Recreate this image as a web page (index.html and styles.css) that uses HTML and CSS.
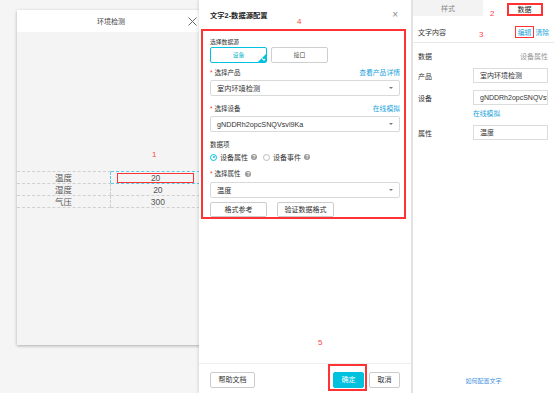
FILE: index.html
```html
<!DOCTYPE html>
<html lang="zh-CN">
<head>
    <meta charset="UTF-8">
    <title>文字2-数据源配置</title>
    <link rel="stylesheet" href="styles.css">
</head>
<body>
<div class="app">
    <div class="stage">
        <div class="preview">
            <div class="preview-head">
                <span class="preview-title">环境检测</span>
                <svg class="preview-close" width="9" height="9" viewBox="0 0 9 9">
                    <path d="M0.5 0.5L8.5 8.5M8.5 0.5L0.5 8.5" stroke="#666" stroke-width="1" fill="none"/>
                </svg>
            </div>
            <div class="preview-body">
                <span class="note note-1">1</span>
                <table class="grid">
                    <tr><td>温度</td><td class="picked"><span class="cell-mark">20</span></td></tr>
                    <tr><td>湿度</td><td>20</td></tr>
                    <tr><td>气压</td><td>300</td></tr>
                </table>
            </div>
        </div>
    </div>

    <div class="dialog">
        <div class="dialog-head">
            <span class="dialog-title">文字2-数据源配置</span>
            <span class="dialog-close">×</span>
        </div>
        <span class="note note-4">4</span>
        <div class="form mark">
            <div class="label label-first">选择数据源</div>
            <div class="src-row">
                <div class="src-btn on">设备</div>
                <div class="src-btn">接口</div>
            </div>

            <div class="label"><span class="req">选择产品</span><span class="link">查看产品详情</span></div>
            <div class="select"><span>室内环境检测</span><i class="caret"></i></div>

            <div class="label gap"><span class="req">选择设备</span><span class="link">在线模拟</span></div>
            <div class="select"><span>gNDDRh2opcSNQVsvl9Ka</span><i class="caret"></i></div>

            <div class="label gap">数据项</div>
            <div class="radios">
                <span class="radio checked"></span><span>设备属性</span><span class="help">?</span>
                <span class="radio second"></span><span>设备事件</span><span class="help">?</span>
            </div>

            <div class="label gap-sm"><span class="req">选择属性 <span class="help">?</span></span></div>
            <div class="select"><span>温度</span><i class="caret"></i></div>

            <div class="btn-row">
                <div class="btn">格式参考</div>
                <div class="btn">验证数据格式</div>
            </div>
        </div>
        <div class="dialog-fill"></div>
        <span class="note note-5">5</span>
        <div class="dialog-foot">
            <div class="btn btn-foot btn-help">帮助文档</div>
            <div class="foot-fill"></div>
            <div class="ok-mark">
                <div class="btn btn-foot btn-ok">确定</div>
            </div>
            <div class="btn btn-foot btn-cancel">取消</div>
        </div>
    </div>

    <div class="side">
        <div class="tabs">
            <div class="tab">样式</div>
            <div class="tab active"><span class="tab-mark">数据</span></div>
        </div>
        <span class="note note-2">2</span>
        <span class="note note-3">3</span>
        <div class="content-row">
            <span>文字内容</span>
            <span class="actions"><span class="link edit-mark">编辑</span><span class="link">清除</span></span>
        </div>
        <div class="prop first">
            <span class="prop-label">数据</span>
            <span class="prop-value">设备属性</span>
        </div>
        <div class="prop">
            <span class="prop-label">产品</span>
            <div class="prop-input">室内环境检测</div>
        </div>
        <div class="prop">
            <span class="prop-label">设备</span>
            <div class="prop-input">gNDDRh2opcSNQVsvl9Ka</div>
        </div>
        <div class="link sim">在线模拟</div>
        <div class="prop">
            <span class="prop-label">属性</span>
            <div class="prop-input">温度</div>
        </div>
        <div class="side-help">如何配置文字</div>
    </div>
</div>
</body>
</html>
```

FILE: styles.css
```css
body {
    margin: 0;
    background-color: #f5f5f5;
    font-family: "Liberation Sans", "Noto Sans CJK SC", sans-serif;
    color: #333;
    overflow: hidden;
}
.app {
    display: flex;
    width: 554px;
    height: 393px;
}
.note {
    position: absolute;
    color: #f44;
    font-size: 8px;
    line-height: 10px;
}

/* preview canvas */
.stage {
    width: 199px;
    flex: none;
    overflow: hidden;
    padding: 10px 0 0 17px;
    box-sizing: border-box;
}
.preview {
    width: 188px;
    height: 335px;
    background-color: #f4f4f4;
    box-shadow: 0 1px 3px rgba(0, 0, 0, 0.3);
}
.preview-head {
    height: 22px;
    background-color: #fff;
    display: grid;
    grid-template-columns: 1fr auto 1fr;
    align-items: center;
}
.preview-title {
    grid-column: 2;
    font-size: 7px;
    color: #444;
}
.preview-close {
    grid-column: 3;
    justify-self: end;
    margin-right: 8px;
}
.preview-body {
    position: relative;
    padding-top: 139px;
}
.note-1 {
    left: 135px;
    top: 118px;
}
.grid {
    width: 100%;
    border-collapse: collapse;
    table-layout: fixed;
}
.grid td {
    height: 11px;
    padding: 0;
    border-top: 1px dashed #d0d0d0;
    border-bottom: 1px dashed #d0d0d0;
    text-align: center;
    font-size: 8.5px;
    line-height: 10px;
    color: #555;
}
.grid td + td {
    border-left: 1px dashed #d0d0d0;
}
.grid td.picked {
    border: 1px dashed #5cc8e6;
}
.cell-mark {
    display: block;
    height: 8px;
    line-height: 8px;
    margin: 0 10px 0 6px;
    border: 1.5px solid #f33;
}

/* dialog */
.dialog {
    position: relative;
    width: 212px;
    flex: none;
    background-color: #fff;
    box-shadow: -1px 0 3px rgba(0, 0, 0, 0.12);
    display: flex;
    flex-direction: column;
}
.dialog-head {
    height: 29px;
    padding: 0 11px;
    display: flex;
    align-items: center;
    justify-content: space-between;
}
.dialog-title {
    font-size: 7.3px;
    font-weight: bold;
    color: #222;
}
.dialog-close {
    font-size: 10px;
    color: #888;
    margin-right: 2px;
}
.note-4 {
    left: 98px;
    top: 17px;
}
.note-5 {
    left: 119px;
    top: 338px;
}
.mark {
    border: 2px solid #f33;
}
.form {
    margin: 0 5px 0 2px;
    padding: 5px 4px 0 7px;
}
.label {
    display: flex;
    justify-content: space-between;
    align-items: center;
    height: 10px;
    font-size: 6.5px;
    color: #333;
    margin: 4px 0 3px;
}
.label-first {
    margin-top: 0;
    margin-bottom: 1px;
    font-size: 5.8px;
}
.label.gap {
    margin-top: 7px;
}
.label.gap-sm {
    margin-top: 6px;
    margin-bottom: 4px;
}
.req::before {
    content: "*";
    color: #f33;
    margin-right: 2px;
}
.link {
    color: #22a3dc;
    font-size: 6.8px;
}
.src-row {
    display: flex;
    gap: 4px;
}
.src-btn {
    position: relative;
    width: 57px;
    height: 16px;
    box-sizing: border-box;
    border: 1px solid #cfcfcf;
    border-radius: 2px;
    font-size: 5.8px;
    line-height: 14px;
    text-align: center;
    color: #444;
    overflow: hidden;
}
.src-btn.on {
    border-color: #00c1de;
    color: #00b0cf;
}
.src-btn.on::after {
    content: "";
    position: absolute;
    right: 0;
    bottom: 0;
    border-left: 8px solid transparent;
    border-bottom: 8px solid #00c1de;
}
.src-btn.on::before {
    content: "";
    position: absolute;
    right: 1px;
    bottom: 2px;
    width: 2px;
    height: 1px;
    border-right: 1px solid #fff;
    border-bottom: 1px solid #fff;
    transform: rotate(40deg);
    z-index: 1;
}
.select {
    height: 16px;
    box-sizing: border-box;
    border: 1px solid #d9d9d9;
    border-radius: 2px;
    padding: 0 6px;
    display: flex;
    align-items: center;
    justify-content: space-between;
    font-size: 7.2px;
    color: #333;
}
.caret {
    width: 0;
    height: 0;
    border-left: 2px solid transparent;
    border-right: 2px solid transparent;
    border-top: 2.5px solid #777;
}
.radios {
    height: 10px;
    display: flex;
    align-items: center;
    font-size: 7px;
    color: #333;
}
.radio {
    width: 7px;
    height: 7px;
    box-sizing: border-box;
    border: 1px solid #bbb;
    border-radius: 50%;
    margin-right: 3px;
    position: relative;
}
.radio.checked {
    border-color: #00c1de;
}
.radio.checked::after {
    content: "";
    position: absolute;
    left: 1.5px;
    top: 1.5px;
    width: 2px;
    height: 2px;
    border-radius: 50%;
    background-color: #00c1de;
}
.radio.second {
    margin-left: 6px;
}
.help {
    display: inline-block;
    width: 6px;
    height: 6px;
    border-radius: 50%;
    background-color: #999;
    color: #fff;
    font-size: 5px;
    line-height: 6px;
    text-align: center;
    font-weight: bold;
    margin-left: 3px;
    vertical-align: middle;
}
.btn-row {
    display: flex;
    gap: 10px;
    margin-top: 4px;
}
.btn {
    width: 57px;
    height: 15px;
    box-sizing: border-box;
    border: 1px solid #ccc;
    border-radius: 2px;
    background-color: #fff;
    font-size: 7px;
    line-height: 13px;
    text-align: center;
    color: #333;
}
.dialog-fill {
    flex: 1;
}
.dialog-foot {
    height: 30px;
    box-sizing: border-box;
    border-top: 1px solid #eee;
    padding: 0 11px 2px;
    display: flex;
    align-items: flex-end;
}
.foot-fill {
    flex: 1;
}
.btn-foot {
    height: 16px;
    line-height: 14px;
}
.btn-help {
    width: 45px;
    margin-bottom: 3px;
}
.btn-cancel {
    width: 31px;
    margin-left: 2px;
    margin-bottom: 3px;
}
.ok-mark {
    border: 2px solid #f33;
    padding: 6px 1px 1px 3px;
}
.btn-ok {
    width: 31px;
    background-color: #00c1de;
    border-color: #00c1de;
    color: #fff;
}

/* settings side panel */
.side {
    position: relative;
    width: 143px;
    min-width: 0;
    flex: none;
    box-sizing: border-box;
    background-color: #fff;
    border-left: 2px solid #e2e2e2;
    display: flex;
    flex-direction: column;
    font-size: 7px;
}
.tabs {
    display: flex;
    height: 16px;
}
.tab {
    width: 70px;
    background-color: #f3f3f3;
    color: #888;
    display: flex;
    align-items: center;
    justify-content: center;
}
.tab.active {
    flex: 1;
    background-color: #fff;
    color: #222;
    padding-left: 12px;
}
.tab-mark {
    width: 32px;
    height: 9px;
    line-height: 9px;
    margin-top: 3px;
    text-align: center;
    border: 2px solid #f33;
}
.note-2 {
    left: 77px;
    top: 9px;
}
.note-3 {
    left: 66px;
    top: 30px;
}
.content-row {
    height: 27px;
    box-sizing: border-box;
    padding: 5px 5px 0 5px;
    border-bottom: 1px solid #e8e8e8;
    display: flex;
    align-items: center;
    justify-content: space-between;
}
.actions {
    display: flex;
    align-items: center;
}
.edit-mark {
    border: 1.5px solid #f33;
    padding: 0 2px;
    margin-right: 1px;
}
.prop {
    display: flex;
    align-items: center;
    padding: 0 6px 0 5px;
    margin-top: 7px;
}
.prop.first {
    margin-top: 8px;
    margin-bottom: 0;
}
.prop-label {
    width: 55px;
    flex: none;
}
.prop-value {
    margin-left: auto;
    color: #999;
}
.prop-input {
    flex: 1;
    min-width: 0;
    height: 15px;
    box-sizing: border-box;
    border: 1px solid #dcdcdc;
    padding: 0 6px;
    line-height: 13px;
    white-space: nowrap;
    overflow: hidden;
}
.sim {
    margin: 3px 0 0 60px;
}
.side-help {
    margin-top: auto;
    margin-bottom: 8px;
    text-align: center;
    color: #3d8fe0;
    font-size: 6px;
}
```
